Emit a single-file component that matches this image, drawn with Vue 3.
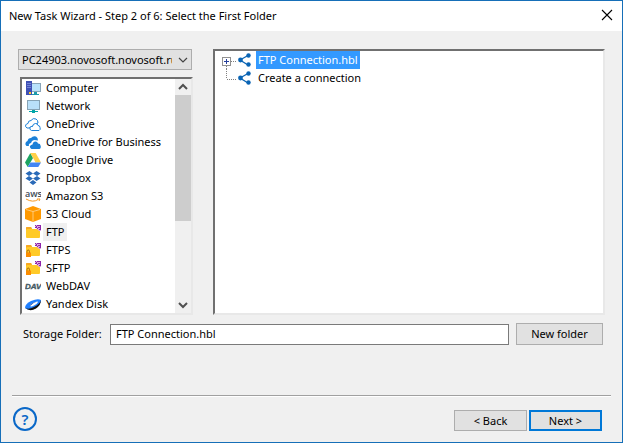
<script setup>
import { ref } from 'vue'

// Source list
const host = ref('pc')
const storages = [
  { icon: 'computer', name: 'Computer' },
  { icon: 'network', name: 'Network' },
  { icon: 'onedrive', name: 'OneDrive' },
  { icon: 'business', name: 'OneDrive for Business' },
  { icon: 'gdrive', name: 'Google Drive' },
  { icon: 'dropbox', name: 'Dropbox' },
  { icon: 'aws', name: 'Amazon S3' },
  { icon: 's3', name: 'S3 Cloud' },
  { icon: 'ftp', name: 'FTP' },
  { icon: 'ftps', name: 'FTPS' },
  { icon: 'sftp', name: 'SFTP' },
  { icon: 'webdav', name: 'WebDAV' },
  { icon: 'yandex', name: 'Yandex Disk' },
]
const storage = ref('FTP')

// Connections tree
const connections = [
  { name: 'FTP Connection.hbl', expandable: true },
  { name: 'Create a connection', expandable: false },
]
const connection = ref('FTP Connection.hbl')

const folder = ref('FTP Connection.hbl')
</script>

<template>
  <div class="window">
    <header class="titlebar">
      <h1 class="title">New Task Wizard - Step 2 of 6: Select the First Folder</h1>
      <button class="close" aria-label="Close">
        <svg width="12" height="12" viewBox="0 0 12 12"><path d="M1 1l10 10M11 1L1 11" stroke="#000" stroke-width="1.1" /></svg>
      </button>
    </header>

    <main class="content">
      <div class="panels">
        <div class="side">
          <div class="combo">
            <select v-model="host" aria-label="Computer name">
              <option value="pc">PC24903.novosoft.novosoft.ru</option>
            </select>
            <svg class="arrow" width="10" height="6" viewBox="0 0 10 6"><path d="M1 1l4 4 4-4" fill="none" stroke="#444" stroke-width="1.2" /></svg>
          </div>

          <div class="list sunken">
            <ul>
              <li v-for="item in storages" :key="item.name" @click="storage = item.name">
                <svg width="16" height="16" viewBox="0 0 16 16">
                  <g v-if="item.icon === 'computer'">
                    <path d="M6 3h10v9H6z" fill="#8aa5b8" />
                    <path d="M7 4h8v7H7z" fill="#b9e2fb" />
                    <path d="M9 12h3v2h2v1H7v-1h2z" fill="#1b9aaa" />
                    <path d="M1 1h6v14H1z" fill="#3f51b5" />
                    <path d="M2 3.5h4M2 5.5h4M2 7.5h4" stroke="#7483d6" />
                    <path d="M4 12h2v2H4z" fill="#ffc928" />
                  </g>
                  <g v-else-if="item.icon === 'network'">
                    <path d="M2 2h13v10H2z" fill="#87a3b5" />
                    <path d="M3 3h11v8H3z" fill="#b9e0fa" />
                    <path d="M7 12h3v1h3v1h-3v1H7v-1H4v-1h3z" fill="#00a5a8" />
                  </g>
                  <g v-else-if="item.icon === 'onedrive'" fill="#fff" stroke="#1b80d8" stroke-linejoin="round">
                    <path d="M4 12H2Q0 11 .7 9 1.500 7.500 3 7.500 3 4.500 6 4.500 8 1.500 11 3q2 1 2 4Z" />
                    <path d="M6.500 14.500q-2.500-1-1.500-3 1-1.500 2.500-1Q8 7.500 10.500 7.500q2 0 2.500 2 2 0 2 2 1 2-1 3Z" />
                  </g>
                  <g v-else-if="item.icon === 'business'" fill="#1b80d8">
                    <path d="M4 12H1.500Q0 11 .5 9 1 7.500 2.500 7 3 4 6 4 8 1.500 11 2.500q2 1 2 4L9 6Q6.500 6.500 6 9q-3 1-2 3Z" />
                    <path d="M6.500 15q-2-1-1.500-3 1-1.500 2.500-1.500Q8 7.500 10.500 7.500q2 0 2.500 2 2.500 0 2.500 2 1 2.500-1 3.500Z" />
                  </g>
                  <g v-else-if="item.icon === 'gdrive'">
                    <path d="M5.3 1L0 10.500 2.700 15 8 6Z" fill="#1da462" />
                    <path d="M5.3 1h5.400L16 10.500h-5.400Z" fill="#ffcf48" />
                    <path d="M5.5 10.500H16L13.300 15H2.700Z" fill="#4285f4" />
                  </g>
                  <g v-else-if="item.icon === 'dropbox'" fill="#2a6ab8">
                    <path d="M4.500 1L8 3.500 4 6 .5 3.500ZM11.500 1L15.500 3.500 12 6 8 3.500ZM4 6l4 2.500L4.500 11 .5 8.500ZM12 6l3.500 2.500L11.500 11 8 8.500ZM8 10l3.500 2.500L8 15l-3.500-2.500Z" />
                  </g>
                  <g v-else-if="item.icon === 'aws'">
                    <text class="aws" x="0" y="9">aws</text>
                    <path d="M1 11q7 4 12 0.500M12 11h3l-1 2" fill="none" stroke="#f7981f" />
                  </g>
                  <g v-else-if="item.icon === 's3'">
                    <path d="M0 3l8-3 8 3v10l-8 3-8-3Z" fill="#ff9900" />
                    <path d="M1 3.500l7 2 7-2M8 5.500v10" fill="none" stroke="#ffd596" stroke-width="0.8" />
                  </g>
                  <g v-else-if="item.icon === 'webdav'">
                    <text class="dav" x="0" y="11">DAV</text>
                  </g>
                  <g v-else-if="item.icon === 'yandex'">
                    <path d="M0 12Q0 8 6 5q7-3 10-1 0 5-6 8.500Q4 15 0 12Z" fill="#2080ff" />
                    <path d="M0 12q4 2 9-1 6-3 7-7 0 5-5 8.500-6 3.500-11-.5Z" fill="#111" />
                    <path d="M5 10q0-2 4-3.500t4-.5q-1 2-4 3.500t-4 .5Z" fill="#fff" />
                    <path d="M5 10q0-2 4-3.500l3-1q-4 1-7 4.500Z" fill="#0b3f9a" />
                  </g>
                  <g v-else>
                    <path d="M1 4q0-1 1-1h4l1 2h7q1 0 1 1v7q0 1-1 1H2q-1 0-1-1Z" fill="#ffca28" />
                    <path d="M1 4q0-1 1-1h4l1 2H2L1 6Z" fill="#f7a823" />
                    <path d="M10 1h6v6h-2l-4-4Z" fill="#d9a8df" />
                    <path d="M10 1.500h1M12 1.500h3M11 2.500h1M13 3.500h2M10 3.500h2M12 4.500h1M14 5.500h2M15.500 1v4" stroke="#8e24aa" />
                    <g v-if="item.icon !== 'ftp'">
                      <path d="M2 11V9.500q0-1.500 1.200-1.500T4.500 9.500V11" fill="none" stroke="#a56a12" />
                      <path d="M1 10.500h5V15H1z" fill="#fb8c00" />
                    </g>
                  </g>
                </svg>
                <span :class="{ current: storage === item.name }">{{ item.name }}</span>
              </li>
            </ul>
            <div class="scrollbar">
              <svg width="16" height="16" viewBox="0 0 16 16"><path d="M4 10l4-4 4 4" fill="none" stroke="#505050" stroke-width="2" /></svg>
              <div class="thumb"></div>
              <svg width="16" height="16" viewBox="0 0 16 16"><path d="M4 6l4 4 4-4" fill="none" stroke="#505050" stroke-width="2" /></svg>
            </div>
          </div>
        </div>

        <ul class="tree sunken">
          <li v-for="item in connections" :key="item.name" @click="connection = item.name">
            <svg width="32" height="18" viewBox="0 0 32 18">
              <path v-if="item.expandable" d="M5.500 15v3M10 10.500h6" fill="none" stroke="#808080" stroke-dasharray="1 1" />
              <path v-else d="M5.500 0v10M6 10.500h10" fill="none" stroke="#808080" stroke-dasharray="1 1" />
              <g v-if="item.expandable">
                <rect x="1.500" y="6.500" width="8" height="8" fill="#fff" stroke="#919191" />
                <path d="M3 10.500h5M5.500 8v5" stroke="#263f9b" />
              </g>
              <path d="M27 4.500L19 9l8 5" fill="none" stroke="#0a64b4" stroke-width="1.300" />
              <circle cx="27.500" cy="4.500" r="2.200" fill="#0a64b4" />
              <circle cx="19.500" cy="9" r="2.400" fill="#0a64b4" />
              <circle cx="27.500" cy="13.500" r="2.200" fill="#0a64b4" />
            </svg>
            <span :class="{ selected: connection === item.name }">{{ item.name }}</span>
          </li>
        </ul>
      </div>

      <div class="folder-row">
        <label for="folder">Storage Folder:</label>
        <input id="folder" v-model="folder" type="text" />
        <button class="btn wide">New folder</button>
      </div>
    </main>

    <footer class="footer">
      <button class="help" aria-label="Help">?</button>
      <div class="nav">
        <button class="btn">&lt; Back</button>
        <button class="btn primary">Next &gt;</button>
      </div>
    </footer>
  </div>
</template>

<style>
body {
  margin: 0;
}
</style>

<style scoped>
* {
  box-sizing: border-box;
}

.window {
  display: flex;
  flex-direction: column;
  min-height: 100vh;
  border: 1px solid #166fb8;
  background: #f0f0f0;
  color: #000;
  font-family: 'Noto Sans', 'Open Sans', sans-serif;
  font-size: 11px;
}

button,
input,
select {
  font: inherit;
  color: inherit;
}

ul {
  margin: 0;
  padding: 0;
  list-style: none;
}

/* Title bar */
.titlebar {
  display: flex;
  justify-content: space-between;
  align-items: center;
  height: 30px;
  padding: 0 9px 2px 8px;
  background: #fff;
}

.title {
  margin: 0;
  font-size: 11px;
  font-weight: normal;
}

.close {
  display: flex;
  padding: 0;
  border: 0;
  background: none;
}

/* Panels */
.content {
  flex: 1;
  padding: 18px 17px 0;
}

.panels {
  display: flex;
  gap: 20px;
}

.side {
  flex: none;
  width: 175px;
}

.combo {
  position: relative;
  margin-right: 1px;
}

.combo select {
  display: block;
  width: 100%;
  height: 21px;
  padding: 0 19px 0 3px;
  border: 1px solid #adadad;
  border-radius: 0;
  background: #e1e1e1;
  appearance: none;
}

.arrow {
  position: absolute;
  top: 8px;
  right: 4px;
  pointer-events: none;
}

.sunken {
  border: 2px solid;
  border-color: #707070 #e8e8e8 #e8e8e8 #707070;
  background: #fff;
}

.list {
  display: flex;
  margin: 7px 0 0 2px;
}

.list ul {
  flex: 1;
}

.list li {
  display: flex;
  align-items: center;
  gap: 2px;
  height: 18px;
  padding-left: 3px;
}

.list li span {
  padding: 0 3px;
  line-height: 18px;
}

.list .current {
  background: #f0f0f0;
}

.aws {
  font-family: 'Open Sans', sans-serif;
  font-size: 9px;
  font-weight: 600;
  fill: #414b57;
}

.dav {
  font-family: 'Liberation Sans', sans-serif;
  font-size: 8px;
  font-style: italic;
  font-weight: bold;
  fill: #455a64;
  stroke: #455a64;
  stroke-width: 0.4px;
}

.scrollbar {
  display: flex;
  flex-direction: column;
  width: 16px;
  background: #f0f0f0;
}

.scrollbar svg:last-child {
  margin-top: auto;
}

.thumb {
  height: 126px;
  background: #cdcdcd;
}

.tree {
  flex: 1;
}

.tree li {
  display: flex;
  gap: 3px;
  height: 18px;
  padding-left: 6px;
}

.tree li span {
  padding: 0 2px;
  line-height: 18px;
}

.tree .selected {
  background: #3399ff;
  color: #fff;
}

/* Storage folder */
.folder-row {
  display: flex;
  align-items: center;
  gap: 7px;
  padding: 8px 2px 0 5px;
}

.folder-row label {
  width: 80px;
  padding-bottom: 1px;
}

.folder-row input {
  flex: 1;
  min-width: 0;
  height: 21px;
  padding: 0 5px 1px;
  border: 1px solid #7a7a7a;
  background: #fff;
}

.btn {
  width: 73px;
  height: 21px;
  padding: 0 0 1px;
  border: 1px solid #adadad;
  background: #e1e1e1;
}

.wide {
  width: 87px;
  height: 22px;
}

.primary {
  border: 2px solid #0078d7;
}

/* Footer */
.footer {
  display: flex;
  justify-content: space-between;
  align-items: center;
  height: 47px;
  margin: 0 11px;
  padding: 0 9px 0 1px;
  border-top: 1px solid #a0a0a0;
  box-shadow: inset 0 1px #fff;
}

.help {
  width: 24px;
  height: 24px;
  padding: 0;
  border: 2px solid #0a68c8;
  border-radius: 50%;
  background: none;
  color: #0a68c8;
  font-size: 15px;
  font-weight: 600;
  line-height: 20px;
}

.nav {
  display: flex;
  gap: 2px;
  padding-top: 3px;
}
</style>
